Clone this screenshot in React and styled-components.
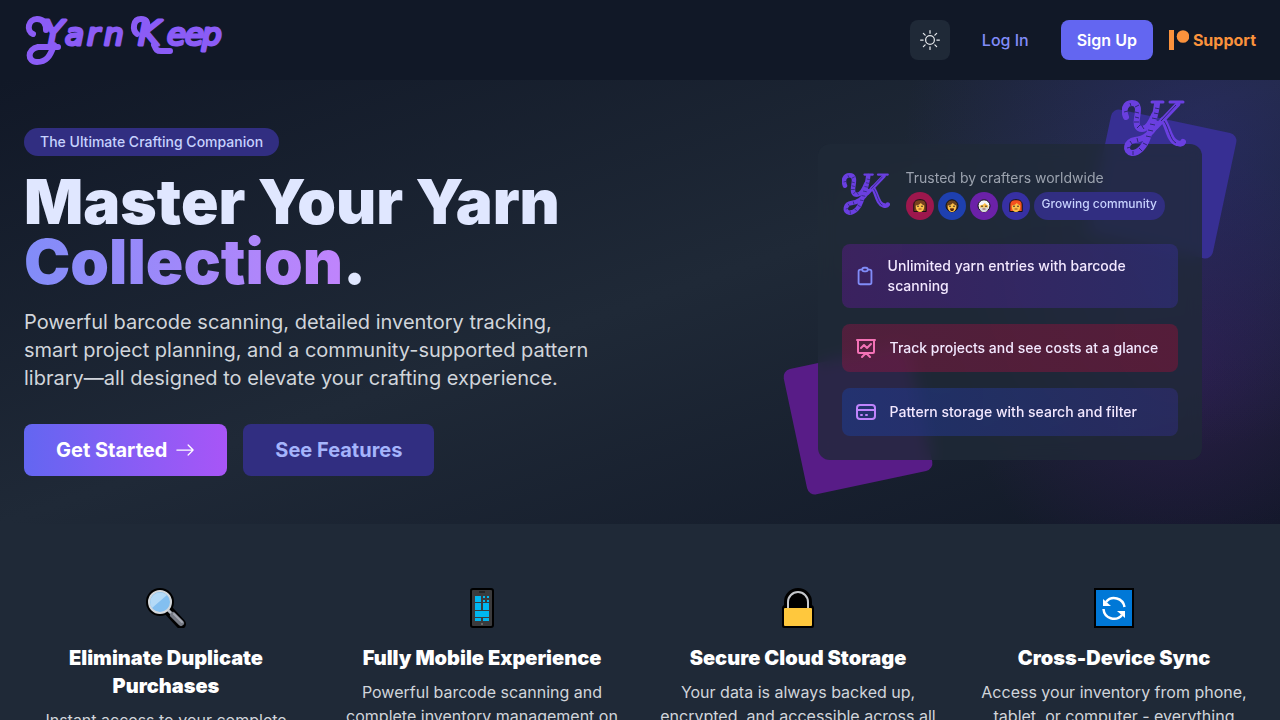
import React from "react";
import styled, { createGlobalStyle } from "styled-components";
import { BsArrowRight, BsSun } from "react-icons/bs";

const GlobalStyle = createGlobalStyle`
  * {
    box-sizing: border-box;
    margin: 0;
    padding: 0;
  }
  body {
    background: #1f2937;
    color: #fff;
    font-family: "Inter", sans-serif;
    font-size: 16px;
    line-height: 24px;
  }
  a {
    color: inherit;
    text-decoration: none;
  }
  svg {
    display: block;
  }
`;

const Wordmark = () => (
  <svg width="200" height="56" viewBox="0 0 200 56" role="img" aria-label="YarnKeep">
    <g
      fill="#8b5cf6"
      stroke="#8b5cf6"
      strokeLinejoin="round"
      strokeLinecap="round"
      fontFamily="DejaVu Sans, sans-serif"
      fontStyle="italic"
    >
      <text y="33" strokeWidth="3" fontSize="31" x="19 41 63 80 114 143 161 178">
        <tspan fontSize="34">Y</tspan>
        arn
        <tspan fontSize="34">K</tspan>
        eep
      </text>
      <g fill="none" strokeWidth="6">
        <path d="M9 22C2 19 4 7 13 7c7 0 9 5 9 11" />
        <path d="M30 33C26 45 22 50 13 50 3 50 3 37 14 35h20" />
        <path d="M113 22c-5-4-4-15 4-15 6 0 7 4 6 9" />
        <path d="M130 33c2 5 3 6 7 6h9" />
      </g>
    </g>
  </svg>
);

// two strands of yarn twisted into the brand mark
const Monogram = ({ width }) => (
  <svg width={width} viewBox="0 0 64 56" role="img" aria-label="YK">
    <g fill="none" stroke="#6a3fe0" strokeLinejoin="round" strokeLinecap="round">
      <path
        strokeWidth="6"
        d="M4 17C1 10 3 3 10 3c8 0 6 9 5 15-1 7 0 11 5 11 6 0 10-9 12-14"
      />
      <path
        strokeWidth="6"
        d="M35 4c-1 11-5 22-9 33-3 9-9 16-16 16-8-1-6-12 3-13 10-1 16-7 22-16"
      />
      <path strokeWidth="5" d="M56 4 34 27" />
      <path strokeWidth="6" d="M41 20c5 5 6 21 14 23 3 1 5 1 6-1" />
      <path strokeWidth="3" d="M30 2h11M48 2h13" />
    </g>
    <g fill="none" stroke="#2e2874" strokeWidth="1">
      <path d="M2 12l4-1M8 3l1 3M13 7l4-2M13 12l4 1M13 17l4 1M12 22l5 0M15 28l3-3M22 29l-2-3M33 8l5 1M32 13l5 1M30 18l5 1M28 24l5 1M26 30l5 1M24 36l5 1M21 43l4 2M17 48l3 3M11 51v4M5 48l4-1M8 41l2 3M15 38l1 4" />
      <path d="M54 5 39 21M42 21c5 7 6 19 12 22" />
    </g>
  </svg>
);

const PatreonIcon = () => (
  <svg width="20" height="20" viewBox="0 0 20 20" fill="#fb923c" aria-hidden="true">
    <rect width="5" height="20" />
    <circle cx="14" cy="6.500" r="6.300" />
  </svg>
);

const outline = {
  clipboard:
    "M9 5H7a2 2 0 00-2 2v12a2 2 0 002 2h10a2 2 0 002-2V7a2 2 0 00-2-2h-2M9 5a2 2 0 002 2h2a2 2 0 002-2M9 5a2 2 0 012-2h2a2 2 0 012 2",
  chart:
    "M7 12l3-3 3 3 4-4M8 21l4-4 4 4M3 4h18M4 4h16v12a1 1 0 01-1 1H5a1 1 0 01-1-1V4z",
  card: "M3 10h18M7 15h1m4 0h1m-7 4h12a3 3 0 003-3V8a3 3 0 00-3-3H6a3 3 0 00-3 3v8a3 3 0 003 3z",
};

const OutlineIcon = ({ name, color }) => (
  <svg
    width="24"
    height="24"
    viewBox="0 0 24 24"
    fill="none"
    stroke={color}
    strokeWidth="2"
    strokeLinecap="round"
    strokeLinejoin="round"
    aria-hidden="true"
  >
    <path d={outline[name]} />
  </svg>
);

const Face = ({ hair, long, beard }) => (
  <svg width="14" height="14" viewBox="0 0 14 14" aria-hidden="true">
    {long ? (
      <path
        d="M.8 12.500V6C.8 2 3.500.7 7 .7S13.200 2 13.200 6v6.500z"
        fill={hair}
        stroke="#111"
        strokeWidth="1"
      />
    ) : (
      <circle cx="7" cy="6.800" r="6" fill={hair} stroke="#111" strokeWidth="1" />
    )}
    <path d="M2.800 6.500c2 0 4-1 5-2.500 1 1 2 2 3.400 2.500V8c0 3-2 5-4.200 5s-4.200-2-4.200-5z" fill="#fcc04a" />
    {beard === "white" && (
      <path d="M2.800 8.500h8.400c0 3.500-2 4.500-4.200 4.500S2.800 12 2.800 8.500z" fill="#d5d8dd" />
    )}
    {beard === "dark" && (
      <path d="M5 9.500h4c0 2-1 2.500-2 2.500s-2-.5-2-2.500z" fill="#422006" />
    )}
    <circle cx="5" cy="7.300" r=".8" fill="#222" />
    <circle cx="9" cy="7.300" r=".8" fill="#222" />
    <path d="M5.500 10h3" stroke="#7c2d12" strokeWidth=".8" />
  </svg>
);

const emoji = {
  search: (
    <>
      <path d="M23 23 35 36" stroke="#000" strokeWidth="10" strokeLinecap="round" />
      <circle cx="14" cy="14" r="14" fill="#000" />
      <path d="M22 22l4 4" stroke="#b6bcc4" strokeWidth="3" />
      <path d="M27 27l8 8" stroke="#777b85" strokeWidth="6" strokeLinecap="round" />
      <path d="M28 26l8 8" stroke="#a5a9b2" strokeWidth="2" strokeLinecap="round" />
      <circle cx="14" cy="14" r="11" fill="#83bff0" stroke="#d4d8dc" strokeWidth="2" />
      <path d="M6 20A10 10 0 0 1 21 7z" fill="#b4daf7" />
    </>
  ),
  phone: (
    <>
      <rect x="8" width="24" height="40" rx="3" fill="#000" />
      <rect x="10" y="2" width="20" height="36" rx="1" fill="#3b3b3d" />
      <path d="M17 4h6" stroke="#111" />
      <path
        d="M13 8h6v6h-6zM21 8h2v2h-2zM25 8h2v2h-2zM21 12h2v2h-2zM25 12h2v2h-2zM13 15h6v7h-6zM21 15h6v7h-6zM13 23h14v6H13zM13 30h6v3h-6zM21 30h6v3h-6z"
        fill="#00b7f1"
      />
      <circle cx="20" cy="36" r="1" fill="#777" />
    </>
  ),
  lock: (
    <>
      <path
        d="M6 17V14a14 14 0 0 1 28 0v3q2 1 2 3v18q0 2-2 2H6q-2 0-2-2V20q0-2 2-3z"
        fill="#000"
      />
      <path d="M10 20V14a10 10 0 0 1 20 0v6" fill="none" stroke="#c5c8cc" strokeWidth="2" />
      <rect x="6" y="20" width="28" height="18" rx="1" fill="#ffc83d" />
    </>
  ),
  sync: (
    <>
      <path d="M0 0h40v40H0z" fill="#000" />
      <path d="M2 2h36v36H2z" fill="#0078d7" />
      <g fill="none" stroke="#fff" strokeWidth="2.500">
        <path d="M12 14a10.500 10.500 0 0 1 18.500 5" />
        <path d="M9.500 21a10.500 10.500 0 0 0 18.500 6" />
      </g>
      <path d="M9 11v7h8zM31 30v-7h-8z" fill="#fff" />
    </>
  ),
};

const people = [
  { bg: "#9d174d", hair: "#78421e", long: true },
  { bg: "#1e40af", hair: "#68401c", beard: "dark" },
  { bg: "#6b21a8", hair: "#f3f4f6", beard: "white" },
  { bg: "#3730a3", hair: "#f4511e", long: true },
];

const highlights = [
  {
    icon: "clipboard",
    color: "#818cf8",
    bg: "linear-gradient(90deg, rgba(88, 28, 135, 0.5), rgba(49, 46, 129, 0.6))",
    text: "Unlimited yarn entries with barcode scanning",
  },
  {
    icon: "chart",
    color: "#f472b6",
    bg: "linear-gradient(90deg, rgba(131, 24, 67, 0.5), rgba(136, 19, 55, 0.5))",
    text: "Track projects and see costs at a glance",
  },
  {
    icon: "card",
    color: "#c084fc",
    bg: "linear-gradient(90deg, rgba(30, 58, 138, 0.6), rgba(49, 46, 129, 0.5))",
    text: "Pattern storage with search and filter",
  },
];

const features = [
  {
    icon: "search",
    title: "Eliminate Duplicate Purchases",
    text: "Instant access to your complete inventory",
  },
  {
    icon: "phone",
    title: "Fully Mobile Experience",
    text: "Powerful barcode scanning and complete inventory management on",
  },
  {
    icon: "lock",
    title: "Secure Cloud Storage",
    text: "Your data is always backed up, encrypted, and accessible across all",
  },
  {
    icon: "sync",
    title: "Cross-Device Sync",
    text: "Access your inventory from phone, tablet, or computer - everything",
  },
];

export default function App() {
  return (
    <>
      <GlobalStyle />
      <Header>
        <a href="#home">
          <Wordmark />
        </a>
        <Nav>
          <ThemeButton type="button" aria-label="Toggle theme">
            <BsSun size={20} />
          </ThemeButton>
          <LoginLink href="#login">Log In</LoginLink>
          <SignUpLink href="#signup">Sign Up</SignUpLink>
          <SupportLink href="#support">
            <PatreonIcon />
            Support
          </SupportLink>
        </Nav>
      </Header>
      <main>
        <Hero>
          <Intro>
            <Tagline>The Ultimate Crafting Companion</Tagline>
            <Title>
              Master Your Yarn <Accent>Collection</Accent>.
            </Title>
            <Lead>
              Powerful barcode scanning, detailed inventory tracking, smart
              project planning, and a community-supported pattern library—all
              designed to elevate your crafting experience.
            </Lead>
            <Actions>
              <ActionButton type="button" $primary>
                Get Started
                <BsArrowRight size={20} />
              </ActionButton>
              <ActionButton type="button">See Features</ActionButton>
            </Actions>
          </Intro>
          <Showcase>
            <CardWrap>
              <Square $corner="top" />
              <Square $corner="bottom" />
              <Card>
                <CardHeader>
                  <Monogram width={48} />
                  <div>
                    <Trusted>Trusted by crafters worldwide</Trusted>
                    <People>
                      {people.map(({ bg, ...face }) => (
                        <Avatar key={bg} $bg={bg}>
                          <Face {...face} />
                        </Avatar>
                      ))}
                      <Community>Growing community</Community>
                    </People>
                  </div>
                </CardHeader>
                <Highlights>
                  {highlights.map((item) => (
                    <Highlight key={item.icon} $bg={item.bg}>
                      <OutlineIcon name={item.icon} color={item.color} />
                      <span>{item.text}</span>
                    </Highlight>
                  ))}
                </Highlights>
              </Card>
              <FloatingLogo>
                <Monogram width={64} />
              </FloatingLogo>
            </CardWrap>
          </Showcase>
        </Hero>
        <Features>
          {features.map((item) => (
            <Feature key={item.icon}>
              <svg width="40" height="40" viewBox="0 0 40 40" aria-hidden="true">
                {emoji[item.icon]}
              </svg>
              <h3>{item.title}</h3>
              <p>{item.text}</p>
            </Feature>
          ))}
        </Features>
      </main>
    </>
  );
}

const Header = styled.header`
  display: flex;
  align-items: center;
  justify-content: space-between;
  height: 80px;
  padding: 0 24px;
  background: #111827;
`;

const Nav = styled.nav`
  display: flex;
  align-items: center;
  gap: 16px;
`;

const ThemeButton = styled.button`
  display: flex;
  align-items: center;
  justify-content: center;
  width: 40px;
  height: 40px;
  border: none;
  border-radius: 8px;
  background: #1f2937;
  color: #e5e7eb;
  cursor: pointer;
`;

const LoginLink = styled.a`
  padding: 8px 16px;
  border-radius: 8px;
  color: #818cf8;
  font-weight: 500;
`;

const SignUpLink = styled(LoginLink)`
  background: #6366f1;
  color: #fff;
  font-weight: 600;
`;

const SupportLink = styled.a`
  display: flex;
  align-items: center;
  gap: 4px;
  color: #fb923c;
  font-weight: 700;
`;

const Hero = styled.section`
  display: grid;
  grid-template-columns: 3fr 2fr;
  align-items: center;
  padding: 48px 24px;
  overflow: hidden;
  background:
    radial-gradient(circle at 94% 15%, rgba(55, 48, 163, 0.35), rgba(49, 46, 129, 0) 300px),
    radial-gradient(circle at 92% 65%, rgba(88, 28, 135, 0.3), rgba(88, 28, 135, 0) 220px),
    linear-gradient(to bottom right, #111827, #1f2937 50%, #111827);
`;

const Intro = styled.div`
  display: flex;
  flex-direction: column;
  align-items: flex-start;
`;

const Tagline = styled.span`
  padding: 4px 16px;
  border-radius: 14px;
  background: #312e81;
  color: #c7d2fe;
  font-size: 14px;
  font-weight: 500;
  line-height: 20px;
`;

const Title = styled.h1`
  max-width: 640px;
  margin-top: 16px;
  color: #e0e7ff;
  font-size: 62px;
  font-weight: 900;
  line-height: 60px;
`;

const Accent = styled.span`
  background: linear-gradient(to right, #818cf8, #c084fc);
  -webkit-background-clip: text;
  background-clip: text;
  color: transparent;
`;

const Lead = styled.p`
  max-width: 576px;
  margin-top: 16px;
  color: #d1d5db;
  font-size: 20px;
  line-height: 28px;
`;

const Actions = styled.div`
  display: flex;
  gap: 16px;
  margin-top: 32px;
`;

const ActionButton = styled.button`
  display: flex;
  align-items: center;
  gap: 8px;
  padding: 12px 32px;
  border: none;
  border-radius: 8px;
  background: ${(props) =>
    props.$primary ? "linear-gradient(to right, #6366f1, #a855f7)" : "#312e81"};
  color: ${(props) => (props.$primary ? "#fff" : "#a5b4fc")};
  font-family: inherit;
  font-size: 20px;
  font-weight: 700;
  line-height: 28px;
  cursor: pointer;
`;

const Showcase = styled.div`
  display: flex;
  justify-content: center;
`;

const CardWrap = styled.div`
  position: relative;
  width: 100%;
  max-width: 384px;
`;

const Square = styled.div`
  position: absolute;
  width: 128px;
  height: 128px;
  border-radius: 8px;
  ${(props) =>
    props.$corner === "top"
      ? "top: -24px; right: -24px; background: #372f93; transform: rotate(12deg);"
      : "bottom: -24px; left: -24px; background: #581c87; transform: rotate(-12deg);"}
`;

const Card = styled.div`
  position: relative;
  padding: 24px;
  border-radius: 12px;
  background: rgba(31, 41, 55, 0.8);
  backdrop-filter: blur(8px);
`;

const CardHeader = styled.div`
  display: flex;
  align-items: center;
  gap: 16px;
  margin-bottom: 24px;
`;

const FloatingLogo = styled.div`
  position: absolute;
  top: -44px;
  right: 16px;
`;

const Trusted = styled.p`
  color: #9ca3af;
  font-size: 14px;
  line-height: 20px;
`;

const People = styled.div`
  display: flex;
  gap: 4px;
  margin-top: 4px;
`;

const Avatar = styled.span`
  display: flex;
  align-items: center;
  justify-content: center;
  width: 28px;
  height: 28px;
  border-radius: 50%;
  background: ${(props) => props.$bg};
`;

const Community = styled.span`
  padding: 4px 8px;
  border-radius: 14px;
  background: #312e81;
  color: #c7d2fe;
  font-size: 12px;
  font-weight: 500;
  line-height: 16px;
`;

const Highlights = styled.ul`
  display: grid;
  gap: 16px;
  list-style: none;
`;

const Highlight = styled.li`
  display: flex;
  align-items: center;
  gap: 12px;
  padding: 12px;
  border-radius: 8px;
  background: ${(props) => props.$bg};
  color: #f3e8ff;
  font-size: 14px;
  font-weight: 500;
  line-height: 20px;
`;

const Features = styled.section`
  display: grid;
  grid-template-columns: repeat(4, 1fr);
  gap: 32px;
  padding: 64px 24px;
  background: #1f2937;
`;

const Feature = styled.article`
  display: flex;
  flex-direction: column;
  align-items: center;
  text-align: center;
  h3 {
    margin-top: 16px;
    font-size: 20px;
    font-weight: 900;
    line-height: 28px;
  }
  p {
    margin-top: 8px;
    color: #d1d5db;
  }
`;
